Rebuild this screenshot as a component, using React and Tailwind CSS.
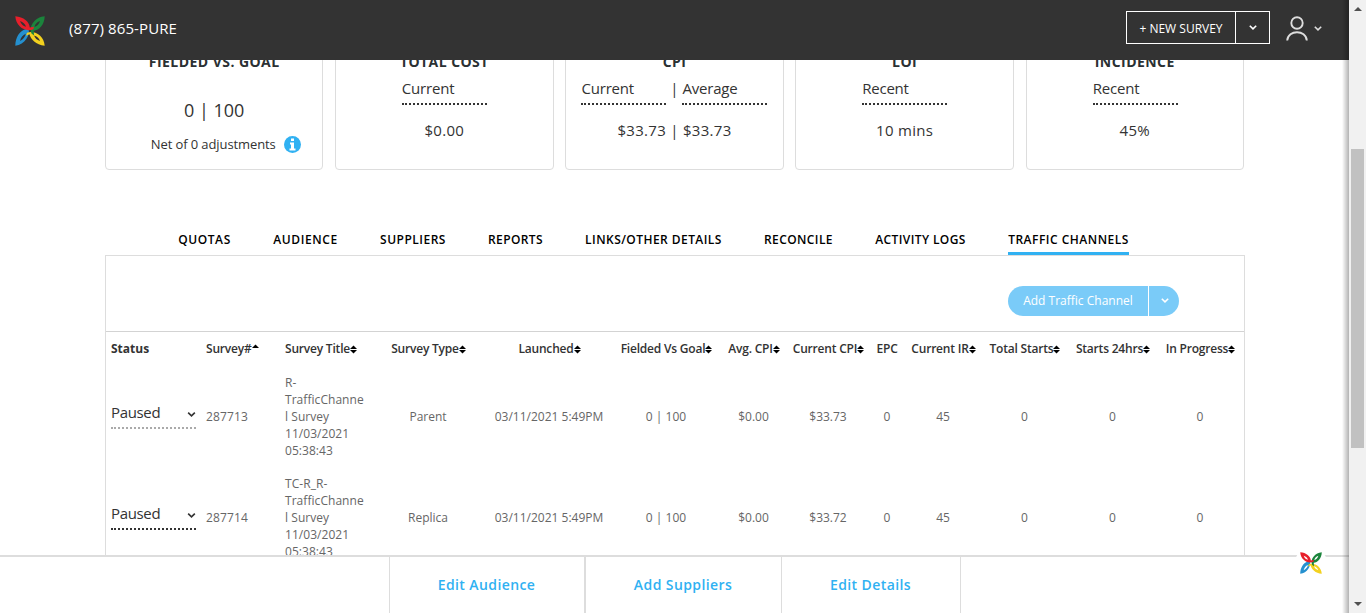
import React from "react";

function Logo({ className }) {
  return (
    <svg viewBox="0 0 30 30" className={className} fillRule="evenodd">
      <path fill="#2590cf" d="M.3 29.700C.5 22 4 14.500 11.500 13L11 10.500L13.500 12.500C15.500 19 10 28.500 .3 29.700ZM5 25C8 23.500 10.200 21 10.800 17.800C7.800 19 5.800 21.500 5 25Z" />
      <path fill="#f3d11f" d="M29.700 29.700C21 29 15.500 23 14.500 18.300L11 19.800L12 16.800C20 14 29 20 29.700 29.700ZM25 25C24 22.200 22 20.300 19 19.500C20 22.200 22 24 25 25Z" />
      <path fill="#1b843c" d="M29.700 .3C29.500 9 24 14.200 18.800 14.800L19 19.500L16.500 17.500C13.500 9 21 1 29.700 .3ZM25 5C21.800 6.300 20 8.300 19.500 11C22.300 10 24.200 8 25 5Z" />
      <path fill="#e71f2b" d="M.3 .3C8.500 .8 14.500 6 14.800 11.500L19 10.800L18.300 13.300C10 16.500 1 10.500 .3 .3ZM5 5C6 8 8 10 11 10.700C10.200 8 8 6 5 5Z" />
    </svg>
  );
}

function Chevron({ className }) {
  return (
    <svg viewBox="0 0 10 6" className={className} fill="none" stroke="currentColor" strokeWidth="2">
      <path d="M1 .8L5 4.600L9 .8" />
    </svg>
  );
}

function Sort({ up }) {
  return (
    <svg viewBox="0 0 7 9" className={up ? "-mt-0.5 h-[9px] w-[7px] shrink-0" : "-mr-px h-[9px] w-[7px] shrink-0"} fill="#000">
      <path d="M3.500 0.500L7 4H0Z" />
      {!up && <path d="M3.500 8.500L7 5H0Z" />}
    </svg>
  );
}

function Dotted({ children }) {
  return (
    <div className="h-[26px] w-[85px] border-b-2 border-dotted border-[#333] text-left text-[15px] leading-[18px] tracking-[-0.2px]">
      {children}
    </div>
  );
}

function Card({ title, children }) {
  return (
    <div className="flex h-[150px] flex-col items-center rounded border border-[#ddd] pt-[31px]">
      <h3 className="-mb-px text-[14px] font-bold leading-[20px] tracking-[0.45px] text-[#2b3133]">{title}</h3>
      {children}
    </div>
  );
}

function Value({ children }) {
  return <div className="mt-[15px] text-[15px] leading-5 tracking-[0.3px]">{children}</div>;
}

const tabs = [
  ["QUOTAS", "w-[53px] tracking-[0.6px]"],
  ["AUDIENCE", "w-[65px] tracking-[0.6px]"],
  ["SUPPLIERS", "w-[66px] tracking-[0.5px]"],
  ["REPORTS", "w-[55px] tracking-[0.4px]"],
  ["LINKS/OTHER DETAILS", "w-[137px] tracking-[0.45px]"],
  ["RECONCILE", "w-[69px] tracking-[0.4px]"],
  ["ACTIVITY LOGS", "w-[91px] tracking-[0.4px]"],
  ["TRAFFIC CHANNELS", "w-[121px] tracking-[0.5px]"],
];

const cols = ["Survey Type", "Launched", "Fielded Vs Goal", "Avg. CPI", "Current CPI", "EPC", "Current IR", "Total Starts", "Starts 24hrs", "In Progress"];

const rows = [
  {
    id: "287713",
    title: ["R-", "TrafficChanne", "l Survey", "11/03/2021", "05:38:43"],
    cells: ["Parent", "03/11/2021 5:49PM", "0 | 100", "$0.00", "$33.73", "0", "45", "0", "0", "0"],
    dim: true,
  },
  {
    id: "287714",
    title: ["TC-R_R-", "TrafficChanne", "l Survey", "11/03/2021", "05:38:43"],
    cells: ["Replica", "03/11/2021 5:49PM", "0 | 100", "$0.00", "$33.72", "0", "45", "0", "0", "0"],
  },
];

const grid = "grid grid-cols-[95px_79px_91px_114px_128px_106px_69px_80px_38px_74px_89px_87px_88px] items-center whitespace-nowrap";

export default function App() {
  return (
    <div className="flex h-[613px] w-[1366px] overflow-hidden bg-white font-['Open_Sans',sans-serif] text-[#333]">
      <div className="relative flex w-[1349px] flex-col">
        <header className="flex h-[60px] shrink-0 items-center bg-[#333] text-white">
          <Logo className="ml-[15px] mt-px h-[30px] w-[30px]" />
          <div className="ml-6 -mt-1 text-[15px] leading-5 tracking-[0.1px]">(877) 865-PURE</div>
          <div className="-mt-[5px] ml-auto flex h-[33px] w-[144px] border border-white text-[12px]">
            <button className="flex w-[109px] items-center justify-center whitespace-nowrap border-r border-white pt-0.5">+ NEW SURVEY</button>
            <button className="flex flex-1 items-center justify-center">
              <Chevron className="h-[5px] w-[8px]" />
            </button>
          </div>
          <svg viewBox="0 0 22 26" className="ml-4 -mt-0.5 h-[26px] w-[22px]" fill="none" stroke="#ddd" strokeWidth="1.900">
            <ellipse cx="11" cy="7" rx="5.700" ry="5.800" />
            <path d="M1.200 24.500C2 13.500 20 13.500 20.800 24.500" />
          </svg>
          <Chevron className="-mt-1 ml-[6px] mr-[27px] h-[5px] w-[8px] text-[#ddd]" />
        </header>

        <main className="flex h-[495px] flex-col overflow-hidden">
          <section className="-mt-10 ml-[105px] grid w-[1139px] shrink-0 grid-cols-5 gap-x-[11.700px]">
            <Card title="FIELDED VS. GOAL">
              <div className="mt-[29px] text-[18px] leading-5">0 | 100</div>
              <div className="mt-3.5 flex items-center gap-2 pl-[23px] text-[13px] leading-5 tracking-[-0.1px]">
                Net of 0 adjustments
                <svg viewBox="0 0 17 17" className="h-[17px] w-[17px]">
                  <circle cx="8.500" cy="8.500" r="8.500" fill="#30b1f2" />
                  <path d="M7 2.500H10V5H7ZM6 6.500H10V12.500H11.500V14.500H5.500V12.500H7V8.500H6Z" fill="#fff" />
                </svg>
              </div>
            </Card>
            <Card title="TOTAL COST">
              <div className="mt-[8px]"><Dotted>Current</Dotted></div>
              <Value>$0.00</Value>
            </Card>
            <Card title="CPI">
              <div className="mt-[8px] flex text-[15px] leading-[18px]">
                <Dotted>Current</Dotted>
                <span className="w-4 text-center">|</span>
                <Dotted>Average</Dotted>
              </div>
              <Value>$33.73 | $33.73</Value>
            </Card>
            <Card title="LOI">
              <div className="mt-[8px]"><Dotted>Recent</Dotted></div>
              <Value>10 mins</Value>
            </Card>
            <Card title="INCIDENCE">
              <div className="mt-[8px] pl-px"><Dotted>Recent</Dotted></div>
              <Value>45%</Value>
            </Card>
          </section>

          <nav className="ml-[178px] mt-[60px] flex shrink-0 gap-[42px] whitespace-nowrap text-[12px] font-semibold leading-[18px] text-black">
            {tabs.map(([t, w], i) => (
              <a key={t} className={`${w} flex h-[25px] justify-center border-b-[3px] pt-px ${i === 7 ? "border-[#30b1f2]" : "border-transparent"}`}>{t}</a>
            ))}
          </nav>

          <section className="ml-[105px] w-[1140px] shrink-0 border border-[#ddd]">
            <div className="flex h-[75px] justify-end pr-[65px] pt-[30px]">
              <div className="flex h-[30px] w-[171px] overflow-hidden rounded-full bg-[#7acbf8] text-[12px] text-white">
                <button className="flex w-[141px] items-center justify-center whitespace-nowrap border-r border-white">Add Traffic Channel</button>
                <button className="flex flex-1 items-center justify-center pb-px pl-px">
                  <Chevron className="h-[5px] w-[8px]" />
                </button>
              </div>
            </div>
            <div className={`${grid} h-[35px] border-t border-[#d3d3d3] text-[12px] font-semibold tracking-[-0.2px]`}>
              <div className="pl-[5px] font-bold tracking-normal">Status</div>
              <div className="flex items-center pl-[5px]">Survey#<Sort up /></div>
              <div className="flex items-center pl-[5px]">Survey Title<Sort /></div>
              {cols.map((c) => (
                <div key={c} className="flex items-center justify-center">{c}{c !== "EPC" && <Sort />}</div>
              ))}
            </div>
            {rows.map((r) => (
              <div key={r.id} className={`${grid} h-[101px] text-[12px] leading-[17px] text-[#666]`}>
                <div className={`-mt-0.5 ml-[5px] flex h-[26px] w-[85px] justify-between border-b-2 border-dotted text-[15px] leading-[18px] tracking-[-0.35px] text-[#333] ${r.dim ? "border-[#aaa]" : "border-[#333]"}`}>
                  Paused
                  <Chevron className="mt-[9px] h-[5px] w-[9px]" />
                </div>
                <div className="pl-[5px] tracking-[0.15px]">{r.id}</div>
                <div className="pl-[5px] tracking-[0.05px]">{r.title.map((t) => <div key={t}>{t}</div>)}</div>
                {r.cells.map((c, i) => <div key={i} className="text-center">{c}</div>)}
              </div>
            ))}
          </section>
        </main>

        <footer className="relative flex h-[58px] shrink-0 border-t-2 border-[#ddd] bg-white pl-[389px] text-[14px] font-semibold tracking-[0.4px] text-[#30b1f2]">
          <a className="flex w-[195px] items-center justify-center border-l border-[#ddd] pb-0.5 pr-px">Edit Audience</a>
          <a className="flex w-[197px] items-center justify-center border-l-2 border-[#ddd] pb-0.5 pr-px">Add Suppliers</a>
          <a className="flex w-[180px] items-center justify-center border-x border-[#ddd] pb-0.5 pr-px">Edit Details</a>
          <div className="absolute right-[22px] -top-[10px] flex h-8 w-8 items-center justify-center rounded-full bg-white">
            <Logo className="h-[22px] w-[22px]" />
          </div>
        </footer>
        <div className="absolute bottom-0 right-0 top-0 w-[7px] bg-gradient-to-r from-transparent to-black/30" />
      </div>

      <aside className="flex w-[17px] flex-col items-center justify-between bg-[#f1f1f1] py-[7px]">
        <svg viewBox="0 0 8 4" className="h-1 w-2" fill="#505050"><path d="M4 0L8 4H0Z" /></svg>
        <div className="mb-auto mt-[138px] h-[299px] w-[13px] bg-[#c1c1c1]" />
        <svg viewBox="0 0 8 4" className="h-1 w-2" fill="#505050"><path d="M0 0H8L4 4Z" /></svg>
      </aside>
    </div>
  );
}
